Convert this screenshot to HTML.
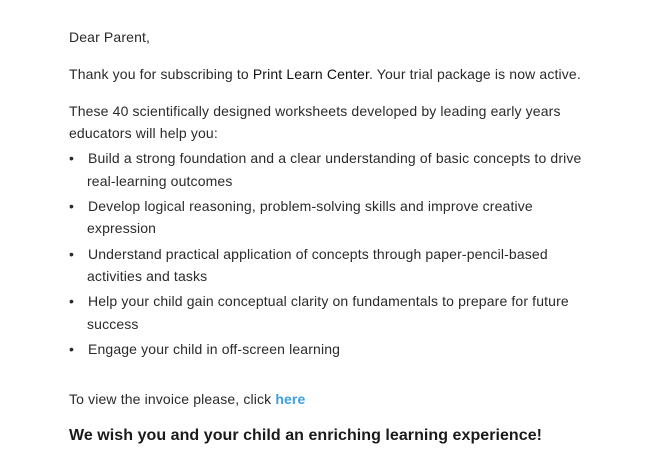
<!DOCTYPE html>
<html><head><meta charset="utf-8"><style>
body{margin:0;width:651px;height:470px;background:#fff;font-family:"Liberation Sans",sans-serif;color:#2a2a2a;font-size:14px;position:relative;overflow:hidden}
.l{position:absolute;left:69px;white-space:nowrap;line-height:18px;transform:translateY(-9px);letter-spacing:0.14px}
.b{position:absolute;left:69px;line-height:18px;transform:translateY(-9px)}
.t{left:88px}
.c{left:87px}
strong{font-weight:normal;color:#111}
a{color:#3b9fe0;font-weight:bold;text-decoration:none}
.h{font-size:16px;font-weight:bold;color:#1a1a1a;line-height:22px;transform:translateY(-11px);letter-spacing:0.05px}
</style></head><body>
<div class="l" style="top:37px">Dear Parent,</div>
<div class="l" style="top:74px">Thank you for subscribing to <strong>Print Learn Center</strong>. Your trial package is now active.</div>
<div class="l" style="top:111px">These 40 scientifically designed worksheets developed by leading early years</div>
<div class="l" style="top:133px">educators will help you:</div>
<div class="b" style="top:158px">•</div><div class="l t" style="top:158px">Build a strong foundation and a clear understanding of basic concepts to drive</div>
<div class="l c" style="top:181px">real-learning outcomes</div>
<div class="b" style="top:206px">•</div><div class="l t" style="top:206px">Develop logical reasoning, problem-solving skills and improve creative</div>
<div class="l c" style="top:228px">expression</div>
<div class="b" style="top:254px">•</div><div class="l t" style="top:254px">Understand practical application of concepts through paper-pencil-based</div>
<div class="l c" style="top:276px">activities and tasks</div>
<div class="b" style="top:301px">•</div><div class="l t" style="top:301px">Help your child gain conceptual clarity on fundamentals to prepare for future</div>
<div class="l c" style="top:324px">success</div>
<div class="b" style="top:349px">•</div><div class="l t" style="top:349px">Engage your child in off-screen learning</div>
<div class="l" style="top:399px">To view the invoice please, click <a>here</a></div>
<div class="l h" style="top:436px">We wish you and your child an enriching learning experience!</div>
</body></html>
